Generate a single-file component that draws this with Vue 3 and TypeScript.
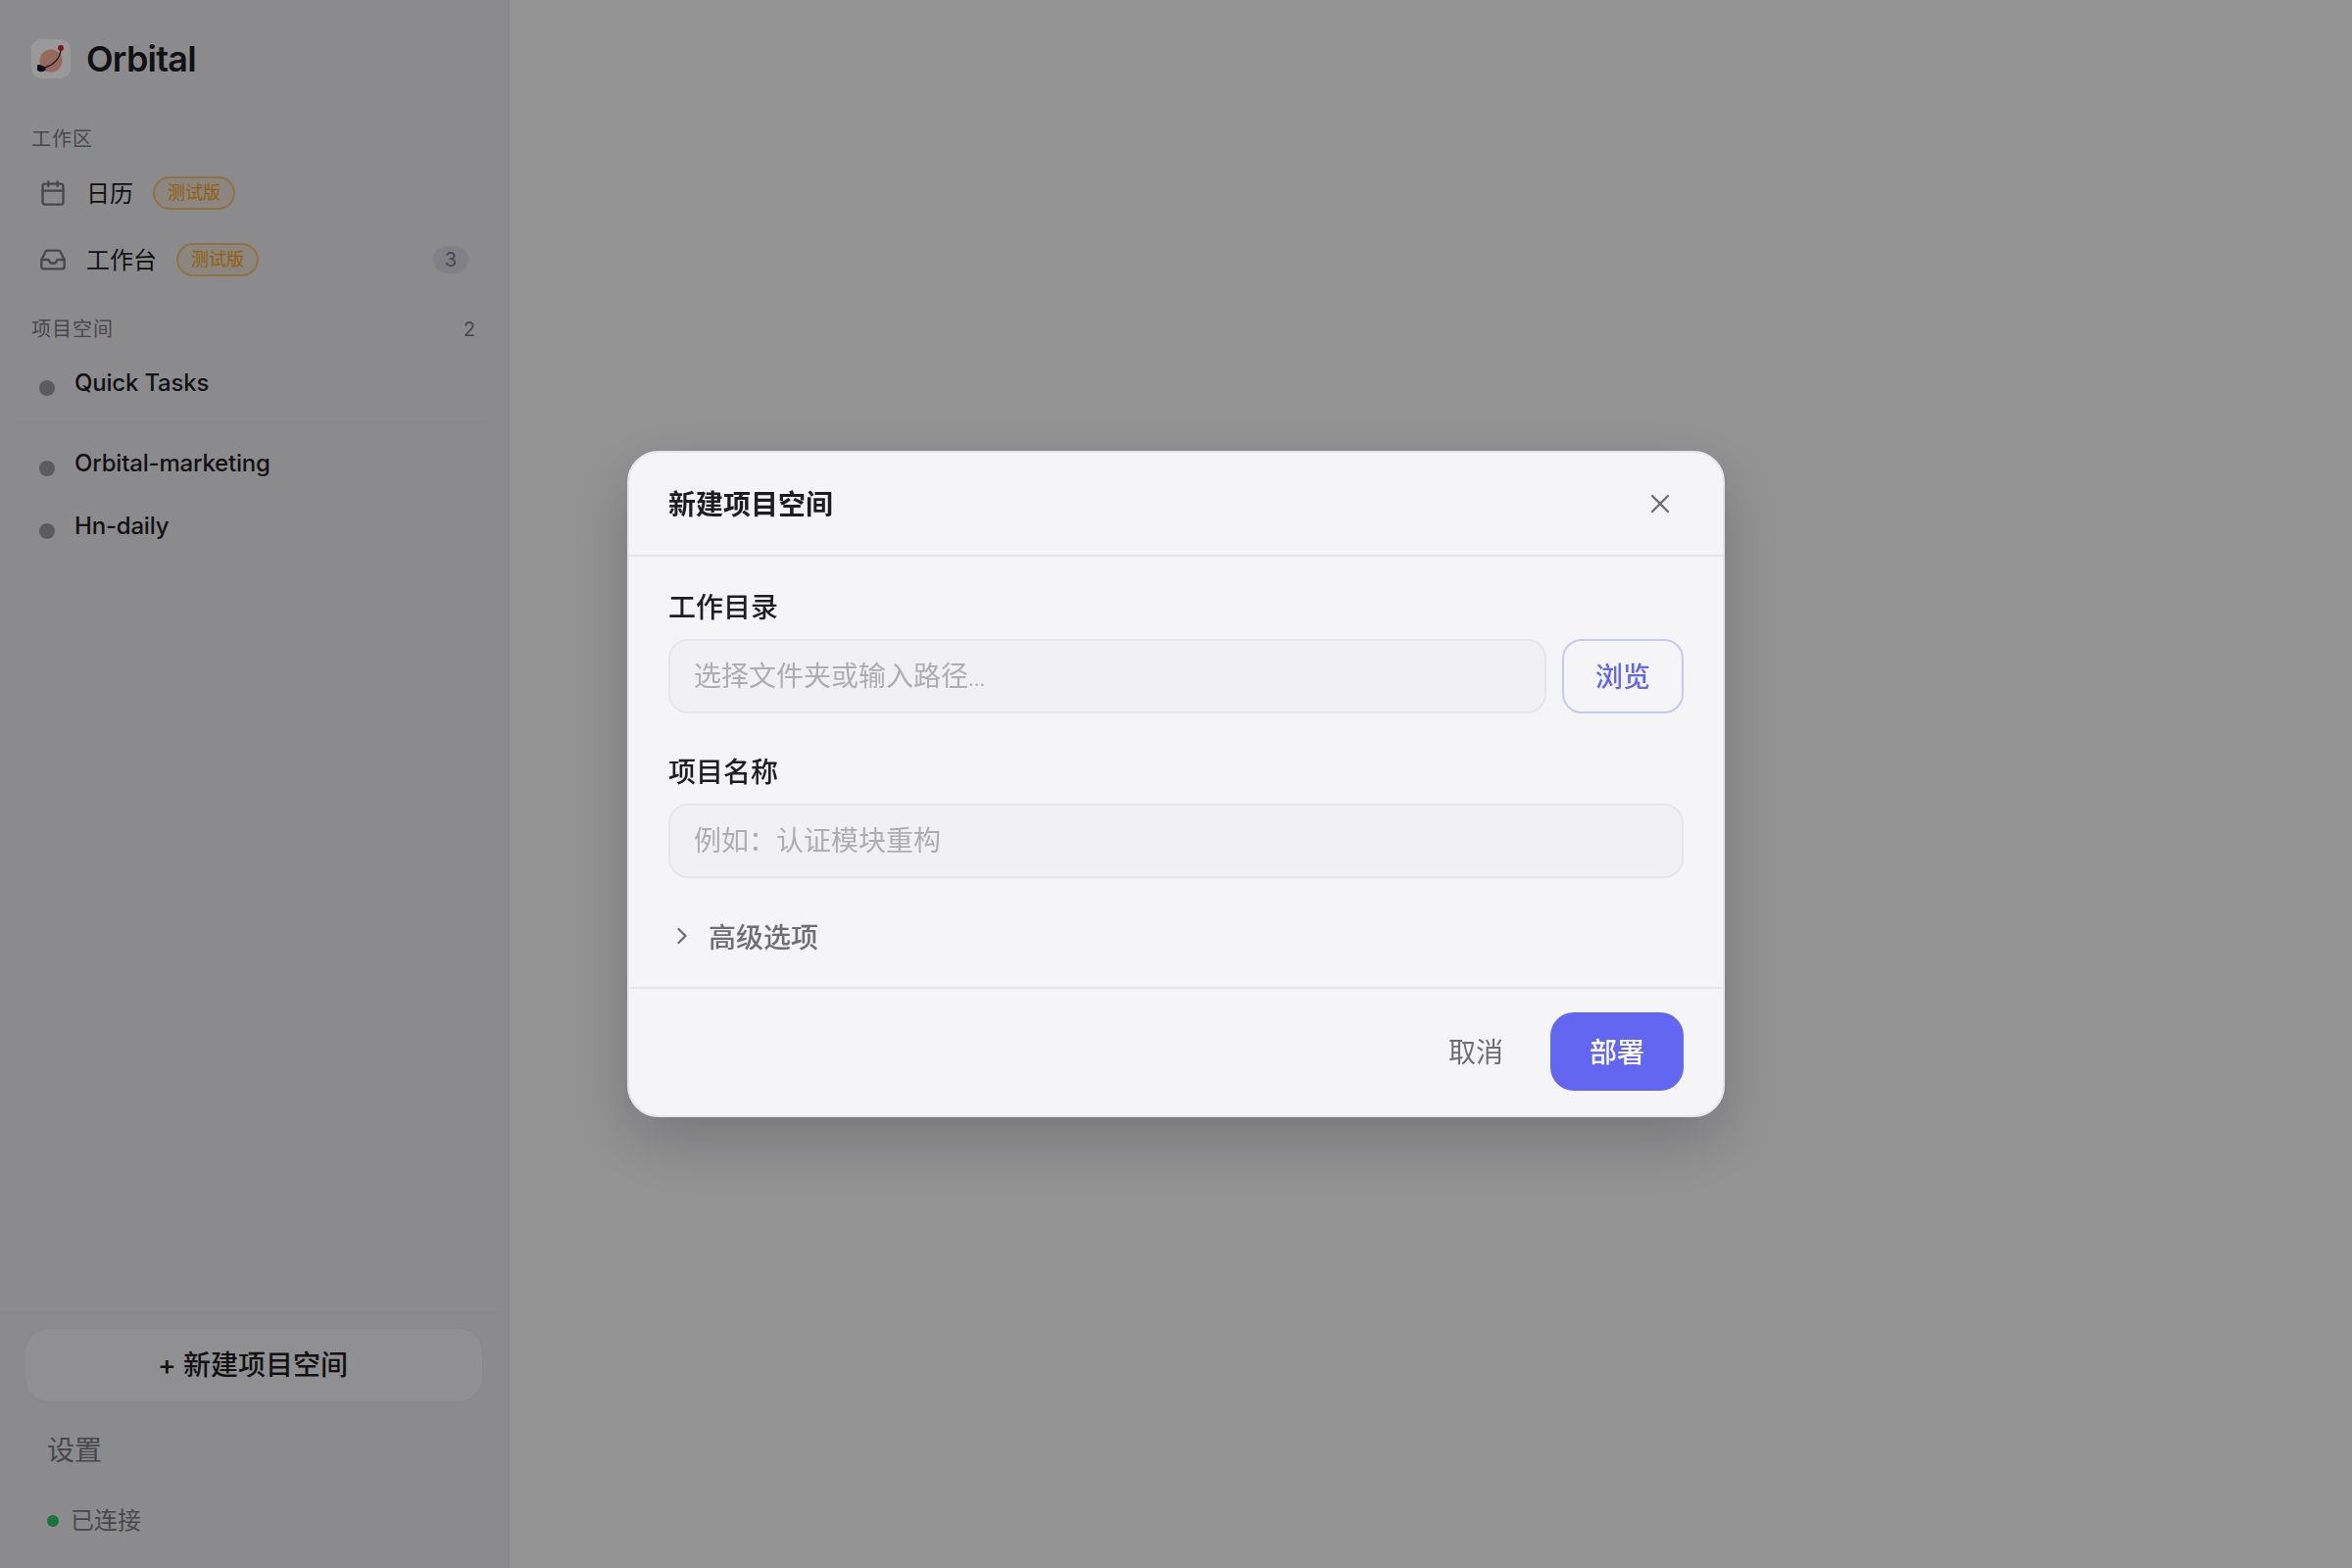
<template>
  <div class="app-shell">
    <!-- 左侧栏 -->
    <aside class="sidebar">
      <div class="brand">
        <div class="brand-logo">
          <svg viewBox="0 0 40 40" width="40" height="40">
            <circle cx="20" cy="22" r="11.5" fill="#fbb09a" />
            <path d="M30 10C30 18 24 27 11 29.5" fill="none" stroke="#1c1c28" stroke-width="1.3" />
            <path d="M6 26.5C9 25 14 28 15 31C12 34 8 33.5 6 31.5Z" fill="#14142a" />
            <circle cx="30" cy="9" r="3" fill="#e0202c" />
          </svg>
        </div>
        <span class="brand-name">Orbital</span>
      </div>

      <div class="section-label first">工作区</div>
      <div v-for="item in navItems" :key="item.label" class="nav-row">
        <svg class="nav-icon" viewBox="0 0 24 24" fill="none" stroke="currentColor" stroke-width="2" stroke-linecap="round" stroke-linejoin="round">
          <path v-for="d in item.paths" :key="d" :d="d" />
        </svg>
        <span class="nav-text">{{ item.label }}</span>
        <span class="beta">测试版</span>
        <span v-if="item.count" class="count-pill">{{ item.count }}</span>
      </div>

      <div class="section-label projects">
        <span>项目空间</span>
        <span class="section-count">{{ projects.length - 1 }}</span>
      </div>
      <template v-for="(name, i) in projects" :key="name">
        <div class="project-row">
          <span class="project-dot"></span>
          <span class="project-name">{{ name }}</span>
        </div>
        <div v-if="i === 0" class="project-divider"></div>
      </template>

      <div class="spacer"></div>

      <div class="sidebar-foot">
        <button class="new-btn"><span>+ 新建项目空间</span></button>
        <div class="settings">设置</div>
        <div class="status"><span class="status-dot"></span>已连接</div>
      </div>
    </aside>

    <main class="main"></main>

    <!-- 蒙层和弹窗 -->
    <div class="mask">
      <div class="dialog">
        <div class="dialog-head">
          <h3>新建项目空间</h3>
          <button class="close-btn">
            <svg viewBox="0 0 24 24" width="32" height="32" fill="none" stroke="currentColor" stroke-width="1.8" stroke-linecap="round">
              <path d="M18 6 6 18" />
              <path d="m6 6 12 12" />
            </svg>
          </button>
        </div>

        <div class="dialog-body">
          <label class="field-label">工作目录</label>
          <div class="path-row">
            <div class="field-input grow">选择文件夹或输入路径<span class="dots">…</span></div>
            <button class="browse-btn"><span>浏览</span></button>
          </div>

          <label class="field-label second">项目名称</label>
          <div class="field-input">例如：认证模块重构</div>

          <div class="advanced">
            <svg viewBox="0 0 24 24" width="28" height="28" fill="none" stroke="currentColor" stroke-width="2" stroke-linecap="round" stroke-linejoin="round">
              <path d="m9 18 6-6-6-6" />
            </svg>
            <span>高级选项</span>
          </div>
        </div>

        <div class="dialog-foot">
          <button class="cancel-btn">取消</button>
          <button class="deploy-btn">部署</button>
        </div>
      </div>
    </div>
  </div>
</template>

<script setup lang="ts">
const navItems = [
  {
    label: '日历',
    count: 0,
    paths: ['M8 2v4', 'M16 2v4', 'M5 4h14a2 2 0 0 1 2 2v14a2 2 0 0 1-2 2H5a2 2 0 0 1-2-2V6a2 2 0 0 1 2-2z', 'M3 10h18']
  },
  {
    label: '工作台',
    count: 3,
    paths: [
      'M22 12h-6l-2 3h-4l-2-3H2',
      'M5.45 5.11 2 12v6a2 2 0 0 0 2 2h16a2 2 0 0 0 2-2v-6l-3.45-6.89A2 2 0 0 0 16.76 4H7.24a2 2 0 0 0-1.79 1.11z'
    ]
  }
]

const projects = ['Quick Tasks', 'Orbital-marketing', 'Hn-daily']
</script>

<style>
html,
body {
  margin: 0;
  background: #f5f5f7;
}
</style>

<style scoped>
.app-shell {
  display: flex;
  height: 100vh;
  font-family: Inter, "Noto Sans CJK SC", sans-serif;
  color: #1d1d1f;
}

.sidebar {
  display: flex;
  flex-direction: column;
  box-sizing: border-box;
  width: 520px;
  background: #e8e8ed;
  border-right: 2px solid #e0e0e5;
}

.brand {
  display: flex;
  align-items: center;
  gap: 16px;
  margin: 40px 0 0 32px;
}

.brand-logo {
  width: 40px;
  height: 40px;
  border-radius: 10px;
  background: #fff;
  overflow: hidden;
}

.brand-logo svg {
  display: block;
}

.brand-name {
  font-size: 36px;
  font-weight: 600;
  letter-spacing: -0.8px;
  line-height: 40px;
}

.section-label {
  display: flex;
  justify-content: space-between;
  padding: 0 33px 0 32px;
  font-size: 20px;
  line-height: 30px;
  letter-spacing: 1px;
  color: #78787e;
}

.section-label.first {
  margin-top: 47px;
  margin-bottom: 6px;
}

.section-label.projects {
  margin-top: 22px;
  margin-bottom: 8px;
}

.nav-row {
  display: flex;
  align-items: center;
  height: 68px;
  padding: 0 40px 0 40px;
}

.nav-icon {
  width: 28px;
  height: 28px;
  color: #78787e;
}

.nav-text {
  margin-left: 20px;
  margin-bottom: 3px;
  font-size: 24px;
}

.beta {
  margin-left: 20px;
  padding: 0 13px;
  font-size: 18px;
  line-height: 30px;
  color: #f59e0b;
  background: rgba(245, 158, 11, 0.1);
  border: 2px solid rgba(245, 158, 11, 0.5);
  border-radius: 18px;
}

.count-pill {
  margin-left: auto;
  width: 36px;
  height: 28px;
  border-radius: 14px;
  font-size: 20px;
  line-height: 28px;
  text-align: center;
  color: #78787e;
  background: #d6d6e0;
}

.section-count {
  letter-spacing: 0;
}

.project-row {
  display: flex;
  align-items: center;
  gap: 20px;
  height: 64px;
  padding-left: 40px;
}

.project-dot {
  flex: none;
  width: 16px;
  height: 16px;
  margin-top: 10px;
  border-radius: 50%;
  background: #9a9aa0;
}

.project-name {
  margin-bottom: 2px;
  font-size: 24px;
  font-weight: 500;
  letter-spacing: -0.2px;
}

.project-divider {
  height: 2px;
  margin: 7px 16px 9px;
  background: #e5e5ea;
}

.spacer {
  flex: 1;
}

.sidebar-foot {
  display: flex;
  flex-direction: column;
  padding-bottom: 28px;
  border-top: 2px solid #e4e4e9;
}

.new-btn {
  height: 74px;
  margin: 16px 26px 0;
  padding: 0 2px 4px 0;
  border: none;
  border-radius: 24px;
  background: #f0f0f5;
  box-shadow: 0 0 2px rgba(0, 0, 0, 0.08);
  font: 500 28px Inter, "Noto Sans CJK SC", sans-serif;
  color: #1d1d1f;
}

.settings {
  margin: 30px 0 0 48px;
  font-size: 28px;
  line-height: 40px;
  color: #78787e;
}

.status {
  display: flex;
  align-items: center;
  gap: 12px;
  margin: 32px 0 0 48px;
  font-size: 24px;
  line-height: 40px;
  color: #78787e;
}

.status-dot {
  width: 12px;
  height: 12px;
  border-radius: 50%;
  background: #22c55e;
}

.main {
  flex: 1;
  background: #f5f5f7;
}

.mask {
  position: fixed;
  inset: 0;
  display: flex;
  align-items: center;
  justify-content: center;
  background: rgba(0, 0, 0, 0.4);
}

.dialog {
  box-sizing: border-box;
  width: 1120px;
  height: 680px;
  background: #f5f5f7;
  border: 2px solid #e5e5ea;
  border-radius: 32px;
  box-shadow: 0 24px 64px rgba(0, 0, 0, 0.2);
}

.dialog-head {
  display: flex;
  align-items: center;
  justify-content: space-between;
  height: 106px;
  box-sizing: border-box;
  padding: 0 36px 0 40px;
  border-bottom: 2px solid #e5e5ea;
}

.dialog-head h3 {
  margin: 0 0 3px;
  font-size: 28px;
  font-weight: 600;
}

.close-btn {
  display: flex;
  align-items: center;
  justify-content: center;
  width: 56px;
  height: 56px;
  padding: 0;
  border: none;
  background: transparent;
  color: #6e6e73;
}

.dialog-body {
  display: flex;
  flex-direction: column;
  padding: 32px 40px 31px;
}

.field-label {
  margin-bottom: 12px;
  font-size: 28px;
  font-weight: 500;
  line-height: 40px;
}

.field-label.second {
  margin-top: 40px;
}

.path-row {
  display: flex;
  gap: 16px;
}

.field-input {
  display: flex;
  align-items: baseline;
  box-sizing: border-box;
  height: 76px;
  padding: 0 24px;
  background: #f0f0f5;
  border: 2px solid #e5e5ea;
  border-radius: 20px;
  font-size: 28px;
  line-height: 72px;
  color: #aeaeb2;
}

.field-input.grow {
  flex: 1;
  min-width: 0;
}

.dots {
  font-size: 20px;
}

.browse-btn {
  flex: none;
  width: 124px;
  height: 76px;
  padding: 0 0 3px;
  background: transparent;
  border: 2px solid #c7c8fa;
  border-radius: 20px;
  font: 500 28px Inter, "Noto Sans CJK SC", sans-serif;
  color: #6366f1;
}

.advanced {
  display: flex;
  align-items: center;
  gap: 13px;
  height: 42px;
  margin-top: 38px;
  font-size: 28px;
  font-weight: 500;
  color: #6e6e73;
}

.dialog-foot {
  display: flex;
  align-items: center;
  justify-content: flex-end;
  gap: 24px;
  padding: 24px 40px;
  border-top: 2px solid #e5e5ea;
}

.cancel-btn {
  height: 80px;
  padding: 0 24px 3px;
  border: none;
  background: transparent;
  font: 400 28px Inter, "Noto Sans CJK SC", sans-serif;
  color: #6e6e73;
}

.deploy-btn {
  width: 136px;
  height: 80px;
  padding: 0 0 3px;
  border: none;
  border-radius: 24px;
  background: #6366f1;
  font: 500 28px Inter, "Noto Sans CJK SC", sans-serif;
  color: #fff;
}
</style>
